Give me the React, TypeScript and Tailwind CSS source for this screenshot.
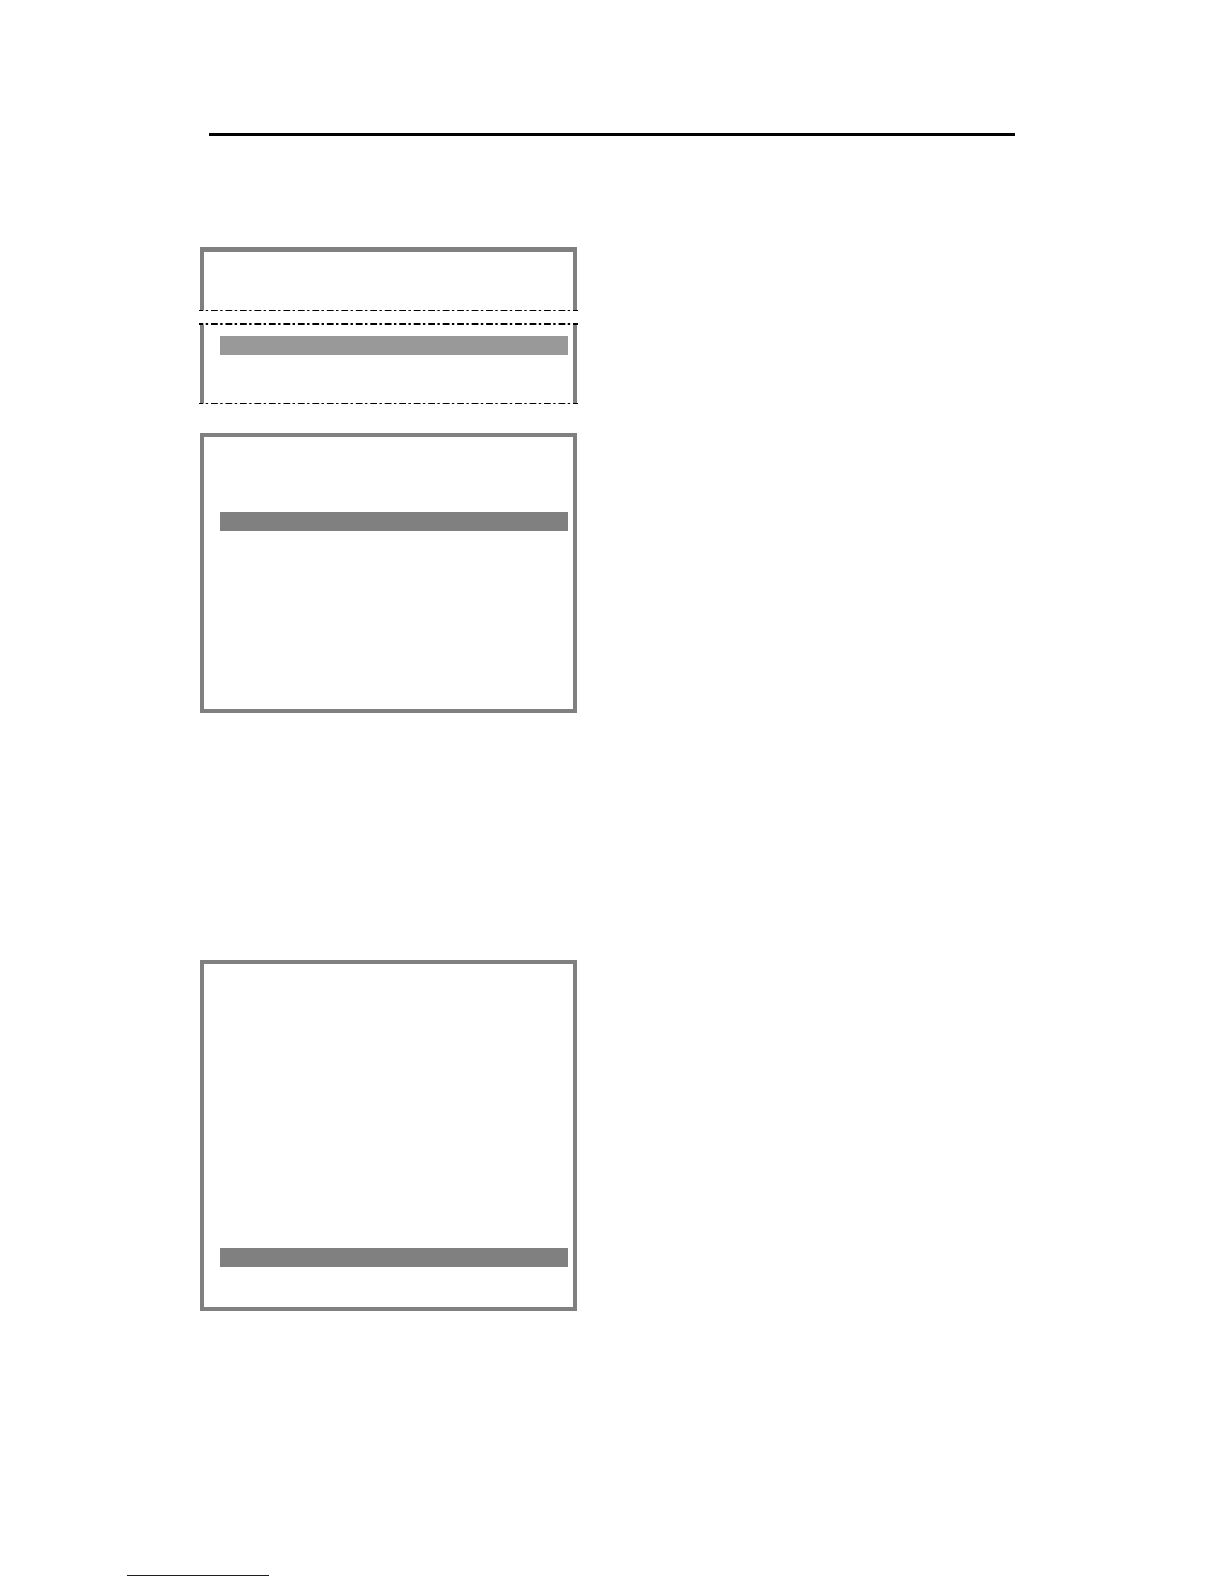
type DashedRuleProps = { thickness: 1 | 2 };

function DashedRule({ thickness }: DashedRuleProps) {
  return (
    <div className="-mx-px">
      <svg
        className="block w-full"
        height={thickness}
        aria-hidden="true"
      >
        <line
          x1="0"
          x2="100%"
          y1={thickness / 2}
          y2={thickness / 2}
          stroke="#000"
          strokeWidth={thickness}
          strokeDasharray="6.8 2.4 2.4 2.88"
          strokeDashoffset="2.48"
        />
      </svg>
    </div>
  );
}

export default function App() {
  return (
    <main className="bg-white pt-[133px] pb-2">
      <hr className="mx-[209px] h-[3px] border-0 bg-black" />

      <div className="mt-[111px] px-[200px]">
        <div className="flex w-[calc(50%-35px)] flex-col">
          <section>
            <div className="h-[63px] border-x-4 border-t-5 border-[#808080]" />
            <DashedRule thickness={1} />
          </section>

          <section className="mt-3">
            <DashedRule thickness={2} />
            <div className="border-x-4 border-[#808080] pt-[11px] pr-[5px] pb-12 pl-4">
              <div className="h-[19px] bg-[#999999]" />
            </div>
            <DashedRule thickness={1} />
          </section>

          <section className="mt-[29px] border-4 border-[#808080] pt-[75px] pr-[5px] pb-[178px] pl-4">
            <div className="h-[19px] bg-[#808080]" />
          </section>

          <section className="mt-[247px] border-4 border-[#808080] pt-[284px] pr-[5px] pb-10 pl-4">
            <div className="h-[19px] bg-[#808080]" />
          </section>
        </div>
      </div>

      <hr className="mt-[264px] ml-[127px] h-px w-[142px] border-0 bg-[#10108c]" />
    </main>
  );
}
